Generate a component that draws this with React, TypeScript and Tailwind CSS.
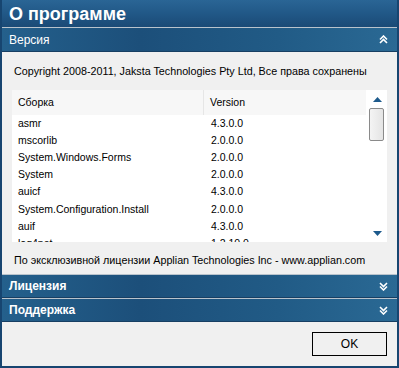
import { useState } from 'react';

const assemblies = [
  { name: 'asmr', version: '4.3.0.0' },
  { name: 'mscorlib', version: '2.0.0.0' },
  { name: 'System.Windows.Forms', version: '2.0.0.0' },
  { name: 'System', version: '2.0.0.0' },
  { name: 'auicf', version: '4.3.0.0' },
  { name: 'System.Configuration.Install', version: '2.0.0.0' },
  { name: 'auif', version: '4.3.0.0' },
  { name: 'log4net', version: '1.2.10.0' },
];

function Chevrons({ up }: { up?: boolean }) {
  return (
    <svg width="9" height="9" viewBox="0 0 9 9" className={up ? '' : 'rotate-180'}>
      <path d="M1 4.5 L4.5 1 L8 4.5 M1 8 L4.5 4.5 L8 8" stroke="white" strokeWidth="1.6" fill="none" />
    </svg>
  );
}

function SectionHeader({ title, open, bold, h }: { title: string; open?: boolean; bold?: boolean; h: string }) {
  return (
    <div className={`flex ${h} shrink-0 items-center justify-between border-b border-[#173f63] bg-[linear-gradient(90deg,#24608c_0%,#1c4f7a_35%,#215b86_70%,#2a6994_100%)] pl-[7px] pr-[9px]`}>
      <span className={`text-[12px] leading-none text-white ${bold ? 'font-bold' : ''}`}>{title}</span>
      <Chevrons up={open} />
    </div>
  );
}

export default function App() {
  const [rows] = useState(assemblies);

  return (
    <div className="flex h-[368px] w-[399px] flex-col bg-[#174570] px-[2px] pb-[2px] font-['Liberation_Sans',Arial,sans-serif] text-[10.75px] text-black">
      {/* Title bar */}
      <div className="flex h-[28px] shrink-0 items-center border-b border-[#b9c3cc] bg-[linear-gradient(180deg,#2a6595_0%,#215887_50%,#1a4a76_100%)] pl-[7px]">
        <span className="text-[18px] font-bold leading-none text-white">О программе</span>
      </div>

      <SectionHeader title="Версия" open h="h-[24px]" />

      <div className="flex shrink-0 flex-col bg-[#f0f0f0] px-[10px] pt-[12px]">
        <p className="whitespace-nowrap pl-[2px] leading-[14px]">Copyright 2008-2011, Jaksta Technologies Pty Ltd, Все права сохранены</p>

        {/* Assembly list */}
        <div className="mt-[12px] flex h-[152px] bg-white text-[10.5px]">
          <div className="flex flex-1 flex-col overflow-hidden">
            <div className="flex h-[25px] shrink-0 items-center bg-[#f7f7f7]">
              <span className="w-[192px] border-r border-[#e6e6e6] pl-[6px] leading-[25px]">Сборка</span>
              <span className="pl-[6px]">Version</span>
            </div>
            {rows.map((r) => (
              <div key={r.name} className="flex h-[17.2px] shrink-0 items-center">
                <span className="w-[192px] pl-[6px]">{r.name}</span>
                <span className="pl-[7px]">{r.version}</span>
              </div>
            ))}
          </div>
          {/* Scrollbar */}
          <div className="flex w-[21px] flex-col items-center pt-[7px] pb-[6px]">
            <svg width="9" height="5" viewBox="0 0 9 5" className="ml-[1px]">
              <path d="M0 5 L4.5 0 L9 5 Z" fill="#1d5a8c" />
            </svg>
            <div className="mt-[6px] h-[33px] w-[15px] rounded-[2px] border border-[#8a8a8a] bg-[linear-gradient(90deg,#f4f4f4,#e4e4e4)]" />
            <div className="flex-1" />
            <svg width="9" height="5" viewBox="0 0 9 5" className="ml-[1px]">
              <path d="M0 0 L4.5 5 L9 0 Z" fill="#1d5a8c" />
            </svg>
          </div>
        </div>

        <p className="mt-[11px] h-[21px] whitespace-nowrap pl-[2px] leading-[14px]">По эксклюзивной лицензии Applian Technologies Inc - www.applian.com</p>
      </div>

      <div className="border-t border-[#b9c3cc]">
        <SectionHeader title="Лицензия" bold h="h-[23px]" />
      </div>
      <div className="border-t border-[#b9c3cc]">
        <SectionHeader title="Поддержка" bold h="h-[23px]" />
      </div>

      <div className="flex flex-1 items-start justify-end bg-[#f0f0f0] pt-[10px] pr-[10px]">
        <button className="h-[24px] w-[75px] border border-black bg-[#f0f0f0] text-[12px]">OK</button>
      </div>
    </div>
  );
}
